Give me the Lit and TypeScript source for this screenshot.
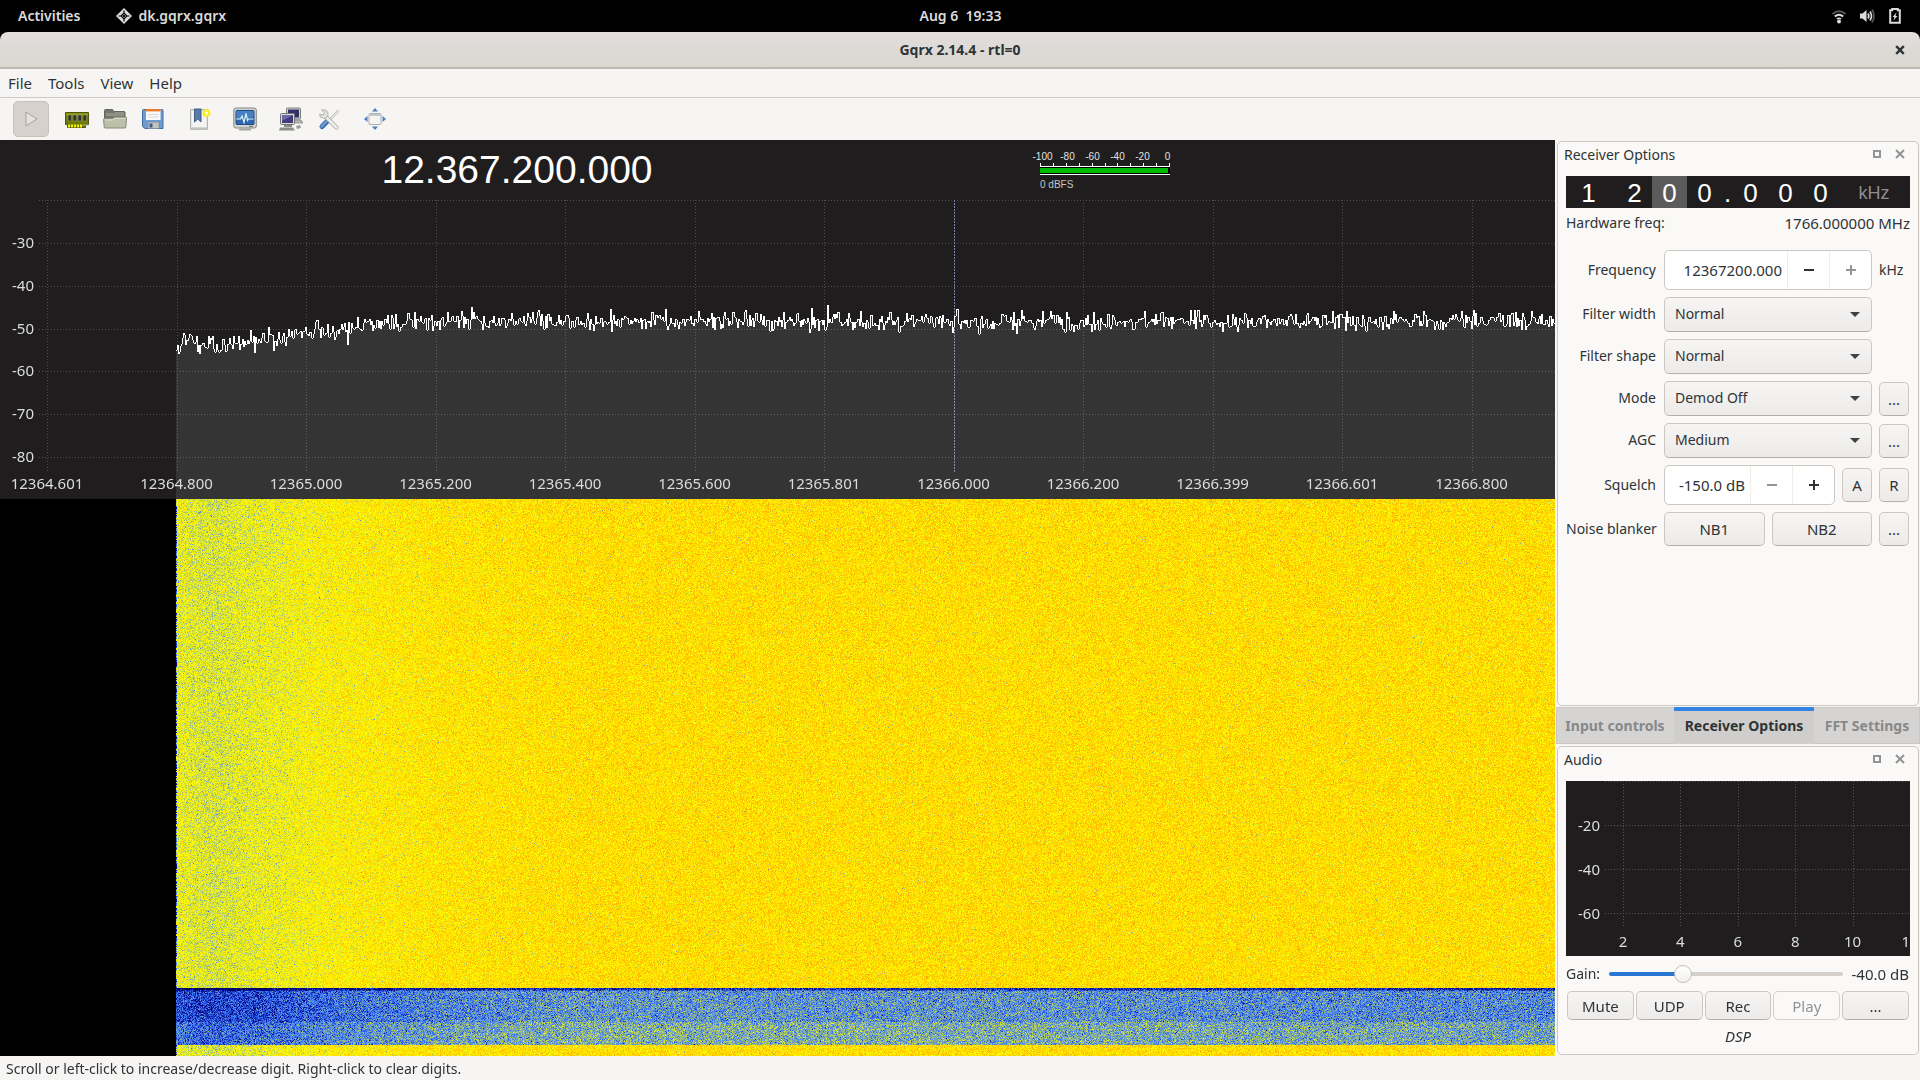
import { LitElement, html, css, svg } from "lit";
import { customElement, property } from "lit/decorators.js";

/** Small deterministic generator, so the noise is the same on every paint. */
function makeRandom(seed: number) {
  let a = seed >>> 0;
  return () => {
    a = (a + 0x6d2b79f5) >>> 0;
    let t = a;
    t = Math.imul(t ^ (t >>> 15), t | 1);
    t ^= t + Math.imul(t ^ (t >>> 7), t | 61);
    return ((t ^ (t >>> 14)) >>> 0) / 4294967296;
  };
}

/** Piecewise linear curve through [x, y] points. */
function curve(points: number[][], x: number): number {
  if (x <= points[0][0]) return points[0][1];
  for (let i = 1; i < points.length; i++) {
    const [x1, y1] = points[i];
    if (x <= x1) {
      const [x0, y0] = points[i - 1];
      return y0 + ((y1 - y0) * (x - x0)) / (x1 - x0);
    }
  }
  return points[points.length - 1][1];
}

/** Waterfall palette: black, navy, blue, yellow, red, white. */
function palette(i: number): [number, number, number] {
  if (i < 20) return [0, 0, 0];
  if (i < 70) return [0, 0, (140 * (i - 20)) / 50];
  if (i < 100) return [(60 * (i - 70)) / 30, (125 * (i - 70)) / 30, (115 * (i - 70)) / 30 + 140];
  if (i < 150)
    return [(195 * (i - 100)) / 50 + 60, (130 * (i - 100)) / 50 + 125, 255 - (255 * (i - 100)) / 50];
  if (i < 250) return [255, 255 - (255 * (i - 150)) / 100, 0];
  return [255, 255, 255];
}

const SIGNAL_START = 176 / 1555;

/** Canvas that fills its box and repaints whenever the box changes size. */
abstract class PaintedCanvas extends LitElement {
  static styles = css`
    :host {
      display: block;
      min-width: 0;
      min-height: 0;
      overflow: hidden;
    }
    .surface {
      display: block;
      width: 100%;
      height: 100%;
    }
  `;

  private observer?: ResizeObserver;

  firstUpdated() {
    this.observer = new ResizeObserver(() => this.repaint());
    this.observer.observe(this);
    this.repaint();
  }

  disconnectedCallback() {
    super.disconnectedCallback();
    this.observer?.disconnect();
  }

  private repaint() {
    const canvas = this.renderRoot.querySelector("canvas") as HTMLCanvasElement;
    const w = Math.round(this.clientWidth);
    const h = Math.round(this.clientHeight);
    if (!w || !h) return;
    canvas.width = w;
    canvas.height = h;
    this.paint(canvas.getContext("2d")!, w, h);
  }

  abstract paint(g: CanvasRenderingContext2D, w: number, h: number): void;

  render() {
    return html`<canvas class="surface"></canvas>`;
  }
}

function dotsAcross(g: CanvasRenderingContext2D, x0: number, x1: number, y: number) {
  for (let x = x0; x < x1; x += 3) g.fillRect(x, y, 1, 1);
}

function dotsDown(g: CanvasRenderingContext2D, x: number, y0: number, y1: number) {
  for (let y = y0; y < y1; y += 3) g.fillRect(x, y, 1, 1);
}

@customElement("spectrum-canvas")
export class SpectrumCanvas extends PaintedCanvas {
  @property({ attribute: false }) columns: number[] = [];
  @property({ attribute: false }) rows: number[] = [];
  @property({ type: Number }) cursor = 0;

  paint(g: CanvasRenderingContext2D, w: number, h: number) {
    g.fillStyle = "#1f1d1e";
    g.fillRect(0, 0, w, h);

    const bottom = h - 28;
    g.fillStyle = "#504e4f";
    dotsAcross(g, 39, w, 0);
    this.rows.forEach((r) => dotsAcross(g, 39, w, Math.round(r * h)));
    this.columns.forEach((c) => dotsDown(g, Math.round(c * w), 0, bottom));

    g.fillStyle = "#7e80a4";
    const cx = Math.round(this.cursor * w);
    for (let y = 0; y < bottom; y += 3) g.fillRect(cx, y, 1, 2);

    // Noise floor, in pixels below the top grid line for a 299 px tall plot.
    const floor = [
      [176, 150], [180, 146], [184, 140], [200, 143], [232, 143], [250, 142],
      [268, 139], [290, 136], [306, 131], [340, 129], [400, 124], [450, 122], [1555, 121],
    ];
    const features: Record<number, number> = {
      250: 130, 268: 127, 347: 145, 369: 119, 461: 111, 471: 107, 473: 112, 532: 112, 538: 110,
      610: 109, 724: 112, 745: 110, 827: 105, 860: 111, 956: 109, 957: 109, 1042: 111, 1110: 129,
      1144: 111, 1190: 110, 1244: 113, 1332: 111, 1346: 111, 1355: 131, 1423: 111, 1461: 111, 1473: 110, 1531: 111,
    };
    const random = makeRandom(71);
    const start = Math.round(SIGNAL_START * w);
    const level: number[] = [];
    let hold = 0;
    let value = 0;
    for (let x = start; x < w; x++) {
      const ref = Math.round((x * 1555) / w);
      if (hold <= 0) {
        const n = random() + random() + random() - 1.5;
        const tail = random() < 0.1 ? (random() - 0.4) * 11 : 0;
        value = value * 0.1 + n * 9 + tail;
        hold = random() < 0.25 ? 2 : 1;
      }
      hold--;
      const y = features[ref] ?? curve(floor, ref) + value;
      level.push(Math.round((y * h) / 299));
    }

    g.fillStyle = "rgba(255, 255, 255, 0.1)";
    level.forEach((y, i) => g.fillRect(start + i, y, 1, h - y));
    g.fillStyle = "#ffffff";
    level.forEach((y, i) => {
      const from = i ? level[i - 1] : y;
      const top = Math.min(from, y);
      g.fillRect(start + i, top, 1, Math.max(1, Math.abs(from - y)));
    });
  }
}

@customElement("waterfall-canvas")
export class WaterfallCanvas extends PaintedCanvas {
  paint(g: CanvasRenderingContext2D, w: number, h: number) {
    const strong = [[0, 146], [12, 143], [40, 140], [70, 144], [110, 148], [160, 154], [260, 160], [420, 163], [1379, 163]];
    const weak = [[0, 92], [20, 86], [90, 90], [160, 98], [260, 104], [400, 110], [800, 109], [1379, 105]];
    const image = g.createImageData(w, h);
    const random = makeRandom(2144);
    const start = Math.round(SIGNAL_START * w);
    const bandTop = Math.round((489 / 557) * h);
    const bandStep = Math.round((523 / 557) * h);
    const bandEnd = Math.round((546 / 557) * h);
    for (let y = 0; y < h; y++) {
      const inBand = y >= bandTop && y < bandEnd;
      for (let x = 0; x < w; x++) {
        const at = (y * w + x) * 4;
        image.data[at + 3] = 255;
        if (x < start) continue;
        const d = ((x - start) * 1555) / w;
        const n = (random() + random() + random() - 1.5) * 2;
        const dip = random();
        let i: number;
        if (inBand) {
          i = curve(weak, d) + n * 12 - (dip < 0.06 ? random() * 26 : 0);
          if (y >= bandStep) i += 9;
          if (y < bandTop + 3) i -= y < bandTop + 2 ? 28 : 14;
        } else {
          i = curve(strong, d) + n * 10 - (dip < 0.04 ? random() * 30 : 0);
          if (d < 1) i = random() < 0.7 ? 60 + random() * 60 : i;
        }
        const [r, gr, b] = palette(i);
        image.data[at] = r;
        image.data[at + 1] = gr;
        image.data[at + 2] = b;
      }
    }
    g.putImageData(image, 0, 0);
  }
}

@customElement("audio-canvas")
export class AudioCanvas extends PaintedCanvas {
  @property({ attribute: false }) columns: number[] = [];
  @property({ attribute: false }) rows: number[] = [];

  paint(g: CanvasRenderingContext2D, w: number, h: number) {
    g.fillStyle = "#1f1d1e";
    g.fillRect(0, 0, w, h);
    g.fillStyle = "#555354";
    dotsAcross(g, 39, w, 0);
    this.rows.forEach((r) => dotsAcross(g, 39, w, Math.round(r * h)));
    this.columns.forEach((c) => dotsDown(g, Math.round(c * w), 0, h - 29));
  }
}

const FREQUENCIES = [
  "12364.601", "12364.800", "12365.000", "12365.200", "12365.400", "12365.600",
  "12365.801", "12366.000", "12366.200", "12366.399", "12366.601", "12366.800",
].map((label, i) => ({ label, at: (47 + i * 129.5) / 1555 }));

const LEVELS = ["-30", "-40", "-50", "-60", "-70", "-80"].map((label, i) => ({
  label,
  at: (43 + i * 42.8) / 299,
}));

@customElement("radio-plotter")
export class RadioPlotter extends LitElement {
  static styles = css`
    :host {
      display: flex;
      flex-direction: column;
      min-width: 0;
      min-height: 0;
      background: #1f1d1e;
      color: #dcdcdc;
    }
    .head {
      display: grid;
      grid-template-columns: 1034fr 521fr;
      height: 60px;
      flex: none;
    }
    .frequency {
      display: flex;
      align-items: center;
      justify-content: center;
      font: 39px "Liberation Sans", sans-serif;
      color: #ffffff;
    }
    .meter {
      width: 130px;
      padding: 11px 0 0 6px;
      font: 10px/12px "Liberation Sans", sans-serif;
      color: #e2e2e2;
    }
    .scale {
      display: grid;
      grid-template-columns: repeat(6, 25px);
      margin-left: -10px;
      text-align: center;
    }
    .bar {
      display: block;
      width: 100%;
      height: 13px;
    }
    .reading {
      padding-top: 3px;
      color: #c4c4c4;
    }
    .spectrum {
      position: relative;
      flex: 299 1 0;
      min-height: 0;
      font-size: 15px;
      line-height: 18px;
    }
    .plot {
      height: 100%;
    }
    .level {
      position: absolute;
      left: 0;
      width: 34px;
      margin-top: -10px;
      text-align: right;
    }
    .tick {
      position: absolute;
      bottom: 7px;
      width: 90px;
      margin-left: -45px;
      text-align: center;
    }
    .fall {
      flex: 557 1 0;
    }
  `;

  render() {
    return html`
      <div class="head">
        <div class="frequency">12.367.200.000</div>
        <div class="meter">
          <div class="scale">
            ${["-100", "-80", "-60", "-40", "-20", "0"].map((n) => html`<span>${n}</span>`)}
          </div>
          <svg class="bar" viewBox="0 0 130 13" preserveAspectRatio="none" shape-rendering="crispEdges">
            <rect x="0" y="4" width="130" height="9" fill="#000" />
            ${Array.from({ length: 11 }, (_, i) => svg`<rect x=${Math.round(i * 12.9)} y="0" width="1" height="4" fill="#fff" />`)}
            <rect x="0" y="3" width="130" height="1" fill="#fff" />
            <rect x="0" y="5" width="128" height="5" fill="#00bb00" />
            <rect x="0" y="11" width="130" height="1" fill="#fff" />
            <rect x="0" y="12" width="130" height="1" fill="#1f1d1e" />
          </svg>
          <div class="reading">0 dBFS</div>
        </div>
      </div>
      <div class="spectrum">
        <spectrum-canvas
          class="plot"
          .columns=${FREQUENCIES.map((f) => f.at)}
          .rows=${LEVELS.map((l) => l.at)}
          .cursor=${954 / 1555}
        ></spectrum-canvas>
        ${LEVELS.map((l) => html`<span class="level" style="top:${l.at * 100}%">${l.label}</span>`)}
        ${FREQUENCIES.map((f) => html`<span class="tick" style="left:${f.at * 100}%">${f.label}</span>`)}
      </div>
      <waterfall-canvas class="fall"></waterfall-canvas>
    `;
  }
}

@customElement("dock-panel")
export class DockPanel extends LitElement {
  @property() heading = "";

  static styles = css`
    :host {
      display: flex;
      flex-direction: column;
      box-sizing: border-box;
      padding: 0 8px 0 8px;
      border: 1px solid #cdc7c2;
      border-radius: 5px;
      background: #faf9f8;
    }
    .title {
      display: flex;
      align-items: center;
      height: 28px;
      flex: none;
      margin-left: -2px;
    }
    .heading {
      flex: 1;
      margin: 0;
      padding-bottom: 2px;
      font: inherit;
      font-size: 14px;
    }
    .tool {
      display: grid;
      place-items: center;
      width: 23px;
      height: 24px;
      margin-bottom: 4px;
      padding: 0;
      border: 0;
      background: none;
      color: #929595;
    }
    .tool:last-child {
      margin-right: -1px;
    }
  `;

  render() {
    return html`
      <div class="title">
        <h2 class="heading">${this.heading}</h2>
        <button class="tool" aria-label="Float">
          <svg width="8" height="8" viewBox="0 0 8 8"><path d="M1 1h6v6H1z" fill="none" stroke="currentColor" stroke-width="2" /></svg>
        </button>
        <button class="tool" aria-label="Close">
          <svg width="10" height="10" viewBox="0 0 10 10"><path d="M1 1l8 8M9 1l-8 8" stroke="currentColor" stroke-width="2" /></svg>
        </button>
      </div>
      <slot></slot>
    `;
  }
}

const controls = css`
  button,
  input,
  select {
    box-sizing: border-box;
    min-width: 0;
    margin: 0;
    font: inherit;
    color: inherit;
  }
  .button {
    padding: 0;
    border: 1px solid #cdc7c2;
    border-bottom-color: #b5afaa;
    border-radius: 5px;
    background: linear-gradient(#f6f5f4, #edebe9);
    text-align: center;
  }
  .button:disabled {
    border-color: #d5d0cc;
    background: #faf9f8;
    color: #929595;
  }
`;

@customElement("receiver-options")
export class ReceiverOptions extends LitElement {
  static styles = [
    controls,
    css`
      :host {
        display: block;
      }
      .digits {
        display: grid;
        grid-template-columns: 5fr 35fr 11fr 35fr 35fr 35fr 11fr 35fr 35fr 35fr 72fr;
        height: 32px;
        margin-top: 6px;
        background: #1f1d1e;
        font: 26px/34px "Liberation Sans", sans-serif;
        color: #ffffff;
        text-align: center;
      }
      .active {
        height: 32px;
        background: #5c5b5b;
      }
      .unit {
        font-size: 18px;
        color: #8e8d8e;
      }
      .hardware {
        display: flex;
        justify-content: space-between;
        padding: 5px 0 17px;
        line-height: 20px;
      }
      .caption {
        font-size: 14px;
      }
      .form {
        display: grid;
        grid-template-columns: 91px minmax(0, 1fr) 30px;
        column-gap: 7px;
        row-gap: 7px;
        align-items: center;
        padding-right: 1px;
      }
      .label {
        padding-right: 1px;
        font-size: 14px;
        text-align: right;
        white-space: nowrap;
      }
      .raised {
        padding-bottom: 2px;
      }
      .pick {
        display: grid;
        align-items: center;
      }
      .select {
        grid-area: 1 / 1;
        height: 35px;
        padding: 0 10px 2px;
        border: 1px solid #cdc7c2;
        border-bottom-color: #b5afaa;
        border-radius: 5px;
        background: linear-gradient(#f6f5f4, #edebe9);
        font-size: 14px;
        appearance: none;
      }
      .arrow {
        grid-area: 1 / 1;
        justify-self: end;
        margin-right: 12px;
        pointer-events: none;
      }
      .spin {
        display: flex;
        flex: 1;
        min-width: 0;
        box-sizing: border-box;
        height: 40px;
        border: 1px solid #cdc7c2;
        border-radius: 5px;
        background: #ffffff;
        overflow: hidden;
      }
      .value {
        flex: 1;
        padding: 0 5px 0 0;
        border: 0;
        background: none;
        text-align: right;
      }
      .step {
        display: grid;
        place-items: center;
        width: 42px;
        flex: none;
        padding: 0;
        border: 0;
        border-left: 1px solid #f0ece8;
        background: none;
        color: #2e3436;
      }
      .step:disabled {
        color: #929595;
      }
      .group {
        display: flex;
        align-items: center;
        gap: 7px;
        min-width: 0;
      }
      .small {
        width: 30px;
        height: 34px;
      }
      .wide {
        flex: 1;
        height: 34px;
      }
    `,
  ];

  private minus = html`<svg width="10" height="10" viewBox="0 0 10 10"><path d="M0 5h10" stroke="currentColor" stroke-width="2" /></svg>`;
  private plus = html`<svg width="10" height="10" viewBox="0 0 10 10"><path d="M0 5h10M5 0v10" stroke="currentColor" stroke-width="2" /></svg>`;

  private select(id: string, label: string, value: string, more = false) {
    return html`
      <label class="label raised" for=${id}>${label}</label>
      <div class="pick">
        <select class="select" id=${id}><option>${value}</option></select>
        <svg class="arrow" width="10" height="5" viewBox="0 0 10 5"><path d="M0 0h10l-5 5z" fill="#3d4345" /></svg>
      </div>
      ${more ? html`<button class="button small" aria-label="${label} options">...</button>` : html`<span></span>`}
    `;
  }

  render() {
    return html`
      <div class="digits">
        <span></span><span>1</span><span></span><span>2</span><span class="active">0</span><span>0</span>
        <span>.</span><span>0</span><span>0</span><span>0</span><span class="unit">kHz</span>
      </div>
      <div class="hardware"><span class="caption">Hardware freq:</span><span>1766.000000 MHz</span></div>
      <div class="form">
        <label class="label" for="frequency">Frequency</label>
        <div class="spin">
          <input class="value" id="frequency" value="12367200.000" />
          <button class="step" aria-label="Decrease frequency">${this.minus}</button>
          <button class="step" aria-label="Increase frequency" disabled>${this.plus}</button>
        </div>
        <span class="caption">kHz</span>
        ${this.select("width", "Filter width", "Normal")}
        ${this.select("shape", "Filter shape", "Normal")}
        ${this.select("mode", "Mode", "Demod Off", true)}
        ${this.select("agc", "AGC", "Medium", true)}
        <label class="label" for="squelch">Squelch</label>
        <div class="group">
          <div class="spin">
            <input class="value" id="squelch" value="-150.0 dB" />
            <button class="step" aria-label="Decrease squelch" disabled>${this.minus}</button>
            <button class="step" aria-label="Increase squelch">${this.plus}</button>
          </div>
          <button class="button small">A</button>
        </div>
        <button class="button small">R</button>
        <span class="label">Noise blanker</span>
        <div class="group">
          <button class="button wide">NB1</button>
          <button class="button wide">NB2</button>
        </div>
        <button class="button small" aria-label="Noise blanker options">...</button>
      </div>
    `;
  }
}

const AUDIO_LEVELS = ["-20", "-40", "-60"].map((label, i) => ({ label, at: (44 + i * 44) / 175 }));
const AUDIO_COLUMNS = ["2", "4", "6", "8", "10", "12"].map((label, i) => ({
  label,
  at: (57 + i * 57.4) / 344,
}));

@customElement("audio-controls")
export class AudioControls extends LitElement {
  static styles = [
    controls,
    css`
      :host {
        display: block;
      }
      .scope {
        position: relative;
        height: 175px;
        margin-top: 6px;
        overflow: hidden;
        color: #dcdcdc;
        line-height: 18px;
      }
      .plot {
        height: 100%;
      }
      .level {
        position: absolute;
        left: 0;
        width: 34px;
        margin-top: -9px;
        text-align: right;
      }
      .tick {
        position: absolute;
        bottom: 6px;
        width: 30px;
        margin-left: -15px;
        text-align: center;
      }
      .gain {
        display: flex;
        align-items: center;
        gap: 9px;
        height: 35px;
        padding-right: 1px;
      }
      .caption {
        font-size: 14px;
      }
      .slider {
        flex: 1;
        height: 20px;
        background: none;
        appearance: none;
      }
      .slider::-webkit-slider-runnable-track {
        box-sizing: border-box;
        height: 4px;
        border-radius: 2px;
        background: linear-gradient(to right, #2a76d2 var(--filled), #d5d0cc var(--filled));
      }
      .slider::-webkit-slider-thumb {
        box-sizing: border-box;
        width: 18px;
        height: 18px;
        margin-top: -7px;
        border: 1px solid #c3bdb8;
        border-radius: 50%;
        background: linear-gradient(#ffffff, #f2f1f0);
        appearance: none;
      }
      .buttons {
        display: flex;
        gap: 2px;
        padding: 0 1px;
      }
      .wide {
        flex: 1;
        height: 29px;
      }
      .mode {
        padding: 6px 0 8px;
        line-height: 20px;
        text-align: center;
        font-style: italic;
      }
    `,
  ];

  render() {
    const gain = 30;
    return html`
      <div class="scope">
        <audio-canvas
          class="plot"
          .columns=${AUDIO_COLUMNS.map((c) => c.at)}
          .rows=${AUDIO_LEVELS.map((l) => l.at)}
        ></audio-canvas>
        ${AUDIO_LEVELS.map((l) => html`<span class="level" style="top:${l.at * 100}%">${l.label}</span>`)}
        ${AUDIO_COLUMNS.map((c) => html`<span class="tick" style="left:${c.at * 100}%">${c.label}</span>`)}
      </div>
      <div class="gain">
        <label class="caption" for="gain">Gain:</label>
        <input class="slider" id="gain" type="range" min="0" max="100" .value=${String(gain)} style="--filled:${gain}%" />
        <span>-40.0 dB</span>
      </div>
      <div class="buttons">
        <button class="button wide">Mute</button>
        <button class="button wide">UDP</button>
        <button class="button wide">Rec</button>
        <button class="button wide" disabled>Play</button>
        <button class="button wide" aria-label="Audio options">...</button>
      </div>
      <div class="mode">DSP</div>
    `;
  }
}

const icons = {
  play: svg`<path d="M7 5l11 7-11 7z" fill="#e4e2e0" stroke="#a3a09d" stroke-width="1" stroke-linejoin="round"/>`,
  memory: svg`
    <path d="M0.5 5.500h23v12h-3v3h-18v-3h-2z" fill="#6d7a08" stroke="#4b5505"/>
    <path d="M1 6h22v3H1z" fill="#8a9a12"/>
    <g fill="#2e3436" stroke="#9aa05c" stroke-width=".6"><rect x="3" y="8" width="3.600" height="6"/><rect x="8" y="8" width="3.600" height="6"/><rect x="13" y="8" width="3.600" height="6"/><rect x="18" y="8" width="3.600" height="6"/></g>
    <path d="M3 17.500h2v3H3zM6 17.500h2v3H6zM9 17.500h2v3H9zM12 17.500h2v3h-2zM15 17.500h2v3h-2z" fill="#f4f200"/>
    <path d="M17.500 18h6" stroke="#b8b8b0"/>`,
  folder: svg`
    <path d="M1.500 18V3.500q0-1 1-1h7l1.500 2h10q1 0 1 1V18z" fill="#73766b" stroke="#63665c"/>
    <path d="M3 6h8l1-1h9v4H3z" fill="#8e9184"/>
    <path d="M.600 12.500q0-1 1-1h8l2-1.500h11q1 0 1 1l-.8 9q-.1 1-1 1H2.200q-1 0-1-1z" fill="#bcc0a8" stroke="#85887a"/>
    <path d="M2 13h8l2-1.500h10.500" fill="none" stroke="#dadcc8"/>`,
  save: svg`
    <path d="M2.500 2.500h18.500q1 0 1 1v18h-18l-2.500-2v-16q0-1 1-1z" fill="#6b9bd2" stroke="#3e6ea8"/>
    <path d="M5 2h14.500v11H5z" fill="#fafafa"/><path d="M5 2h14.500v2.400H5z" fill="#e87a2a"/>
    <path d="M7 7.500h10.500M7 10h10.500" stroke="#d4d6d4"/>
    <path d="M7 15h11v6.500H7z" fill="#c0c4c0" stroke="#7d8a97" stroke-width=".7"/><rect x="8.500" y="16.500" width="3" height="4" fill="#3a5f8d"/>`,
  bookmark: svg`
    <path d="M3.500 2.500h17v20h-17z" fill="#e6e7e4" stroke="#b4b6b1"/><path d="M5 4h14v16H5z" fill="#f4f4f3"/>
    <path d="M4 21.500h16" stroke="#c2c4be" stroke-width="2"/>
    <path d="M7.500 2h6.500v13l-3.200-3-3.300 3z" fill="#5a7ba6" stroke="#3f5e88"/>
    <circle cx="19.500" cy="6" r="4" fill="#f6ef2c"/><circle cx="19.500" cy="6" r="1.600" fill="#fffef0"/>`,
  monitor: svg`
    <rect x=".8" y="1" width="22.500" height="20" rx="2" fill="#d2d4d0" stroke="#858782"/>
    <rect x="3" y="3.500" width="18" height="14" rx="1" fill="#2f66ae" stroke="#1f4a85"/>
    <path d="M3.500 4h17v6l-17 3z" fill="#5b8fd0" opacity=".6"/>
    <path d="M3.500 12h4l1.500-3 2 6.500 2-9 1.500 7 1-1.500h5" fill="none" stroke="#d9f4f4" stroke-width="1.200"/>
    <path d="M6 22.500h12" stroke="#a3a5a0" stroke-width="2"/><path d="M16 19.300h4" stroke="#6d706a"/>`,
  network: svg`
    <rect x="7.500" y="1" width="14" height="11" rx="1" fill="#d3d4d0" stroke="#7d7f7a"/><rect x="9" y="2.500" width="11" height="8" fill="#34306a"/>
    <path d="M10 13h12l2 3h-7z" fill="#b9bab5" stroke="#7d7f7a" stroke-width=".7"/>
    <rect x="1.500" y="6.500" width="14" height="11" rx="1" fill="#dcddd9" stroke="#70726d"/><rect x="3" y="8" width="11" height="8" fill="#413c7c"/>
    <path d="M3 8h11l-11 6z" fill="#6f6aa5"/>
    <path d="M5 18h8v2H5zM1 20.500h13l2 3H0z" fill="#8a8c87"/><path d="M17 19l4-1 1 3-4 1z" fill="#9a9c97"/>`,
  tools: svg`
    <path d="M21.500 3.500l-9 9.500" stroke="#a4a6a1" stroke-width="2.400"/><path d="M21.500 3.500l-9 9.500" stroke="#eeefec" stroke-width="1.200"/>
    <path d="M10 14.500l-5 5" stroke="#2f62a0" stroke-width="5" stroke-linecap="round"/><path d="M9.500 14.500l-5 5" stroke="#6c9bd4" stroke-width="2.600" stroke-linecap="round"/>
    <path d="M7.500 8.500l12 12" stroke="#a4a6a1" stroke-width="4" stroke-linecap="round"/>
    <path d="M7.500 8.500l12 12" stroke="#eeefec" stroke-width="2.600" stroke-linecap="round"/>
    <path d="M4.500 3l3 2.500-1.500 2.500-3.500-1q0 4 4 4.500 5-.5 4.500-5.500-1-4-6.500-3z" fill="#e2e3e0" stroke="#a4a6a1" stroke-width=".8"/>`,
  fullscreen: svg`
    <path d="M12 1l3 3.500H9zM12 23l3-3.500H9zM1 12l3.500-3v6zM23 12l-3.500-3v6z" fill="#4b7fbe"/>
    <rect x="6" y="6.500" width="12" height="11" rx="1" fill="#f4f4f3" stroke="#aeb0ab"/>
    <path d="M6.500 7h11v2h-11z" fill="#c3c8ce"/>`,
};

@customElement("app-root")
export class AppRoot extends LitElement {
  static styles = css`
    :host {
      display: flex;
      flex-direction: column;
      height: 100vh;
      overflow: hidden;
      background: #000000;
      color: #2e3436;
      font: 15px/20px "Noto Sans", "Open Sans", sans-serif;
    }
    button {
      padding: 0;
      border: 0;
      background: none;
      font: inherit;
      color: inherit;
    }
    .shell {
      display: grid;
      grid-template-columns: 1fr auto 1fr;
      align-items: center;
      height: 32px;
      flex: none;
      padding: 0 17px 0 18px;
      color: #dcdcdc;
      font-weight: 600;
      font-size: 14px;
    }
    .left,
    .right {
      display: flex;
      align-items: center;
    }
    .left {
      gap: 36px;
    }
    .app {
      display: flex;
      align-items: center;
      gap: 6px;
    }
    .right {
      justify-content: flex-end;
      gap: 12px;
    }
    .clock {
      white-space: pre;
    }
    .titlebar {
      display: grid;
      grid-template-columns: 1fr auto 1fr;
      align-items: center;
      box-sizing: border-box;
      height: 37px;
      flex: none;
      padding: 1px 15px 0;
      border-bottom: 2px solid #bfb8b1;
      border-radius: 8px 8px 0 0;
      background: linear-gradient(#e1dedb, #dad6d2);
    }
    .name {
      grid-column: 2;
      margin: 0;
      font-size: 14px;
      font-weight: 700;
    }
    .close {
      justify-self: end;
      display: grid;
      place-items: center;
      width: 10px;
      height: 20px;
    }
    .menu {
      display: flex;
      align-items: center;
      box-sizing: border-box;
      gap: 16px;
      height: 29px;
      flex: none;
      padding: 0 8px;
      border-bottom: 1px solid #cecac7;
      background: #f6f5f4;
    }
    .toolbar {
      display: flex;
      align-items: center;
      height: 42px;
      flex: none;
      padding: 0 13px;
      background: #f6f5f4;
    }
    .tool {
      display: grid;
      place-items: center;
      width: 38px;
      height: 36px;
    }
    .first {
      box-sizing: border-box;
      width: 36px;
      margin-right: 9px;
      border: 1px solid #c8c2bd;
      border-radius: 5px;
      background: #d6d1cd;
    }
    .apart {
      margin-left: 8px;
    }
    .main {
      display: grid;
      grid-template-columns: minmax(0, 1fr) 365px;
      flex: 1;
      min-height: 0;
      background: #f6f5f4;
    }
    .docks {
      display: flex;
      flex-direction: column;
      min-height: 0;
      padding: 1px 0;
    }
    .dock {
      margin: 0 1px 0 2px;
    }
    .grow {
      flex: 1;
      min-height: 0;
    }
    .tabs {
      display: grid;
      grid-template-columns: 118fr 140fr 106fr;
      flex: none;
      height: 37px;
      margin: 1px 0 2px 1px;
      background: #d6d4d2;
      box-shadow: inset 0 0 0 1px #cdc7c2;
      font-size: 14px;
      font-weight: 700;
    }
    .tab {
      color: #86888a;
      white-space: nowrap;
    }
    .current {
      border-top: 4px solid #3584e4;
      padding-bottom: 4px;
      background: #d0cecc;
      color: #2e3436;
    }
    .status {
      flex: none;
      height: 24px;
      padding: 0 6px;
      background: #f6f5f4;
      font-size: 14px;
      line-height: 25px;
    }
  `;

  private tool(label: string, icon: unknown, extra = "") {
    return html`<button class="tool ${extra}" aria-label=${label} title=${label}>
      <svg width="24" height="24" viewBox="0 0 24 24">${icon}</svg>
    </button>`;
  }

  render() {
    return html`
      <header class="shell">
        <div class="left">
          <button>Activities</button>
          <button class="app">
            <svg width="16" height="16" viewBox="0 0 16 16">
              <path d="M8 0l8 8-8 8-8-8z" fill="#dcdcdc" />
              <path d="M5 8l3-3 3 3-3 3zM8 2.500V5M13.500 8H11M8 13.500V11M2.500 8H5" fill="none" stroke="#000" stroke-width="1.200" />
              <circle cx="8" cy="8" r="1.200" fill="#000" />
            </svg>
            dk.gqrx.gqrx
          </button>
        </div>
        <div class="clock">Aug 6  19:33</div>
        <div class="right">
          <svg width="16" height="16" viewBox="0 0 16 16" fill="none" stroke="#dcdcdc" stroke-width="2">
            <path d="M1.500 6q6.500-5.500 13 0" opacity=".4" />
            <path d="M3.800 8.600q4.200-3.600 8.400 0" />
            <path d="M5.900 11q2.100-1.600 4.200 0" stroke-width="1.500" />
            <circle cx="8" cy="13.500" r="2" fill="#dcdcdc" stroke="none" />
          </svg>
          <svg width="16" height="16" viewBox="0 0 16 16" fill="none" stroke="#dcdcdc" stroke-width="1.700">
            <path d="M1 5.500h2.500L7.500 2v12l-4-3.500H1z" fill="#dcdcdc" stroke="none" />
            <path d="M9 5.500q1.600 2.500 0 5M11 3.500q3 4.500 0 9" />
            <path d="M13 1.500q4 6.500 0 13" opacity=".4" />
          </svg>
          <svg width="16" height="16" viewBox="0 0 16 16">
            <path d="M3.200 2.200h2V1h5.600v1.200h2v12.600H3.200z" fill="none" stroke="#dcdcdc" stroke-width="2" />
            <path d="M9.500 4.500L5.500 9h2l-1 3.500 4-4.500h-2z" fill="#dcdcdc" />
          </svg>
        </div>
      </header>
      <div class="titlebar">
        <h1 class="name">Gqrx 2.14.4 - rtl=0</h1>
        <button class="close" aria-label="Close window">
          <svg width="10" height="10" viewBox="0 0 10 10"><path d="M1.200 1.200l7.600 7.600M8.800 1.200l-7.600 7.600" stroke="#2e3436" stroke-width="2.400" /></svg>
        </button>
      </div>
      <nav class="menu">
        <button>File</button><button>Tools</button><button>View</button><button>Help</button>
      </nav>
      <div class="toolbar">
        ${this.tool("Start DSP", icons.play, "first")}
        ${this.tool("Configure I/O devices", icons.memory)}
        ${this.tool("Load settings", icons.folder)}
        ${this.tool("Save settings", icons.save)}
        ${this.tool("Bookmarks", icons.bookmark, "apart")}
        ${this.tool("I/Q recorder", icons.monitor, "apart")}
        ${this.tool("Remote control", icons.network, "apart")}
        ${this.tool("Remote settings", icons.tools)}
        ${this.tool("Full screen", icons.fullscreen, "apart")}
      </div>
      <main class="main">
        <radio-plotter></radio-plotter>
        <aside class="docks">
          <dock-panel class="dock grow" heading="Receiver Options"><receiver-options></receiver-options></dock-panel>
          <div class="tabs" role="tablist">
            <button class="tab" role="tab" aria-selected="false">Input controls</button>
            <button class="tab current" role="tab" aria-selected="true">Receiver Options</button>
            <button class="tab" role="tab" aria-selected="false">FFT Settings</button>
          </div>
          <dock-panel class="dock" heading="Audio"><audio-controls></audio-controls></dock-panel>
        </aside>
      </main>
      <footer class="status">Scroll or left-click to increase/decrease digit. Right-click to clear digits.</footer>
    `;
  }
}
